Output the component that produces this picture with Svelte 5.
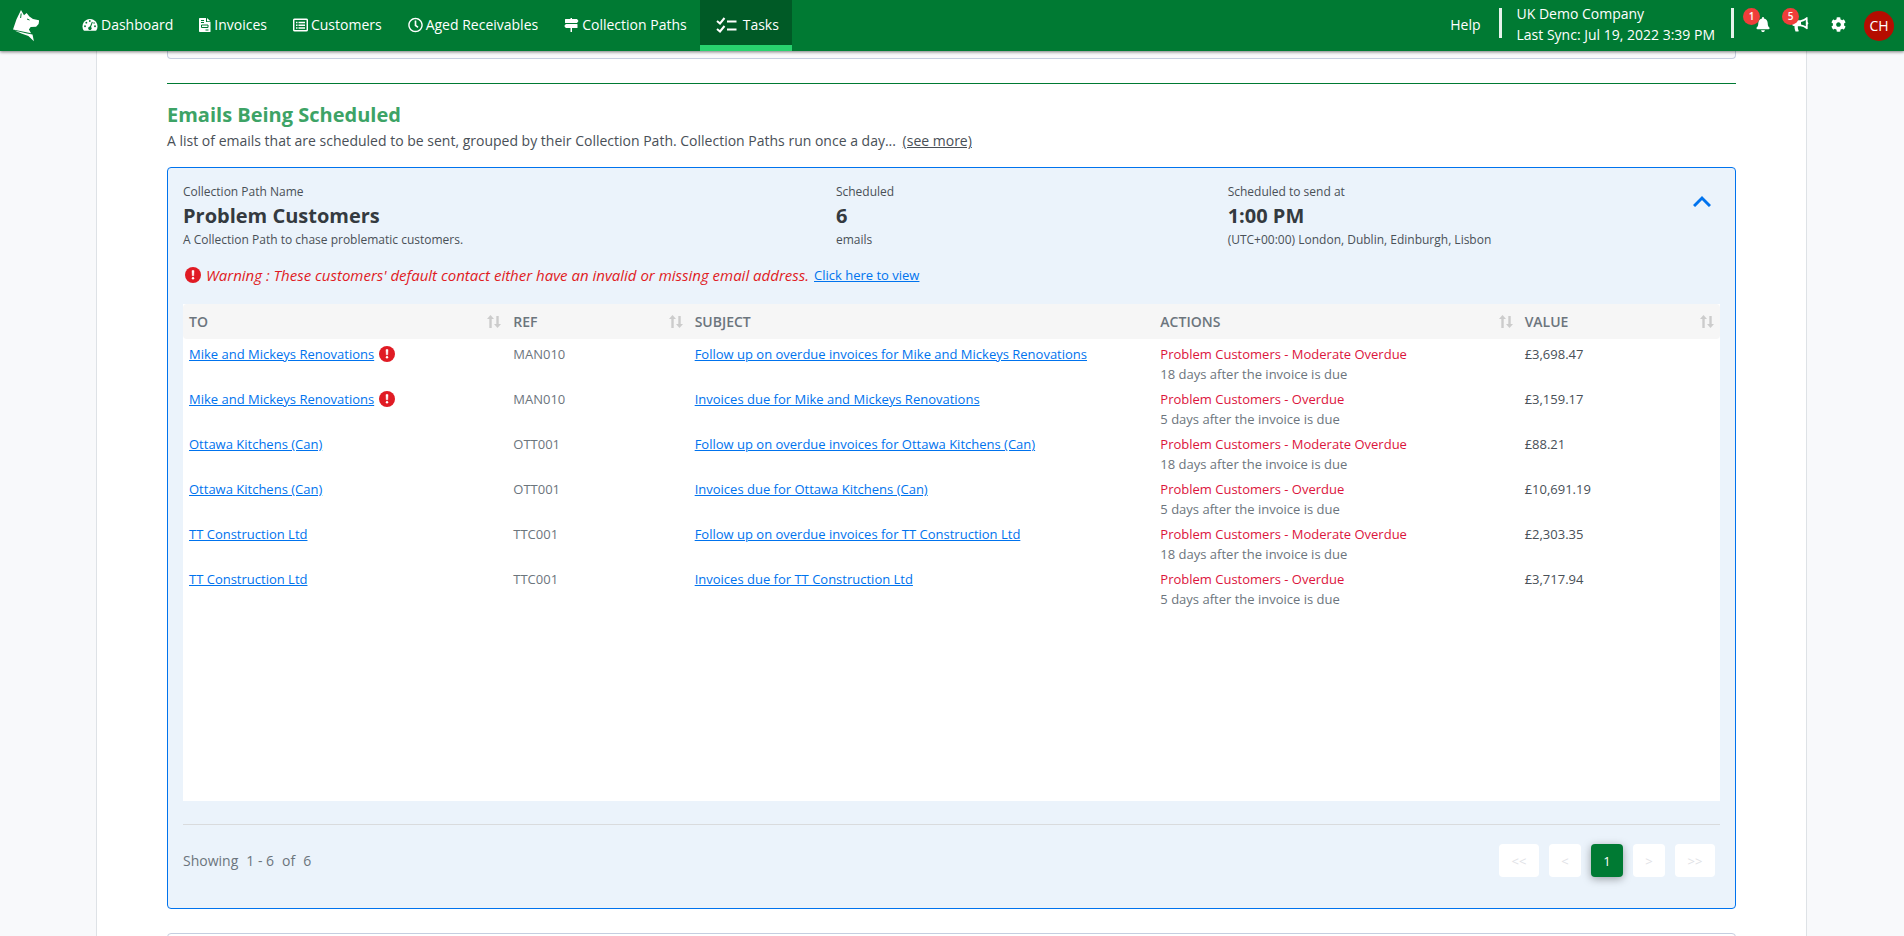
<script lang="ts">
   type Task = {
      to: string;
      ref: string;
      subject: string;
      action: string;
      timing: string;
      value: string;
      hasWarning?: boolean;
   };

   const navItems = [
      { text: "Dashboard", icon: "gauge" },
      { text: "Invoices", icon: "invoice" },
      { text: "Customers", icon: "list" },
      { text: "Aged Receivables", icon: "clock" },
      { text: "Collection Paths", icon: "signs" },
      { text: "Tasks", icon: "tasks" },
   ];
   const activeItem = "Tasks";

   const columns = [
      { name: "To", isSortable: true },
      { name: "Ref", isSortable: true },
      { name: "Subject", isSortable: false },
      { name: "Actions", isSortable: true },
      { name: "Value", isSortable: true },
   ];

   const moderate = { action: "Problem Customers - Moderate Overdue", timing: "18 days after the invoice is due" };
   const overdue = { action: "Problem Customers - Overdue", timing: "5 days after the invoice is due" };

   const followUp = (to: string, ref: string, value: string, hasWarning = false): Task => ({
      to, ref, value, hasWarning, subject: `Follow up on overdue invoices for ${to}`, ...moderate,
   });
   const due = (to: string, ref: string, value: string, hasWarning = false): Task => ({
      to, ref, value, hasWarning, subject: `Invoices due for ${to}`, ...overdue,
   });

   const tasks: Task[] = [
      followUp("Mike and Mickeys Renovations", "MAN010", "£3,698.47", true),
      due("Mike and Mickeys Renovations", "MAN010", "£3,159.17", true),
      followUp("Ottawa Kitchens (Can)", "OTT001", "£88.21"),
      due("Ottawa Kitchens (Can)", "OTT001", "£10,691.19"),
      followUp("TT Construction Ltd", "TTC001", "£2,303.35"),
      due("TT Construction Ltd", "TTC001", "£3,717.94"),
   ];

   let isOpen = $state(true);
   const toggleIsOpen = () => (isOpen = !isOpen);
</script>

{#snippet warningIcon()}
   <svg class="warning-icon" viewBox="0 0 16 16" role="img" aria-label="Warning">
      <circle cx="8" cy="8" r="8" fill="#e01b24" />
      <path d="M7 3.6h2l-.3 5.2H7.3z" fill="#fff" stroke="#fff" stroke-width=".5" />
      <circle cx="8" cy="11.3" r="1.2" fill="#fff" />
   </svg>
{/snippet}

{#snippet navIcon(name: string)}
   {#if name === "gauge"}
      <svg width="16" height="16" viewBox="0 0 17 16">
         <path fill="#fff" d="M8.500 1.500A8 8 0 0 0 1.600 13.500q.3.500.9.500h12q.6 0 .9-.5A8 8 0 0 0 8.500 1.500z" />
         <g fill="#007a33">
            <circle cx="8.300" cy="3.800" r="1" />
            <circle cx="4.600" cy="5.500" r="1" />
            <circle cx="3.200" cy="9.300" r="1" />
            <circle cx="13.800" cy="9.300" r="1" />
            <circle cx="12.800" cy="6" r=".8" />
            <path d="M10.500 4.500l1 .4-1.900 5.100a1.900 1.900 0 1 1-1.100-.4z" />
         </g>
      </svg>
   {:else if name === "invoice"}
      <svg width="12" height="16" viewBox="0 0 12 16">
         <path fill="#fff" d="M.8 1H7v4h4.500v9.500q0 .5-.5.500H.8q-.8 0-.8-.8V1.800Q0 1 .8 1zM8 1l3.500 3.200H8z" />
         <path fill="none" stroke="#007a33" d="M2 3.500h3M2 5.500h3M2.500 8h6.500v2.500H2.500zM6.500 13h3" />
      </svg>
   {:else if name === "list"}
      <svg width="15" height="16" viewBox="0 0 15 16" fill="none" stroke="#fff">
         <rect x=".7" y="2.200" width="13.600" height="11.600" rx="1" stroke-width="1.500" />
         <path stroke-width="1.500" d="M3 5.500h1.500M3 8.200h1.500M3 10.900h1.500M5.500 5.500H12M5.500 8.200H12M5.500 10.900H12" />
      </svg>
   {:else if name === "clock"}
      <svg width="15" height="16" viewBox="0 0 512 512" fill="#fff">
         <path d="M256 8C119 8 8 119 8 256s111 248 248 248 248-111 248-248S393 8 256 8zm0 448c-110.500 0-200-89.500-200-200S145.500 56 256 56s200 89.500 200 200-89.500 200-200 200zm61.800-104.400l-84.900-61.700c-3.100-2.300-4.900-5.900-4.900-9.700V116c0-6.600 5.400-12 12-12h32c6.600 0 12 5.400 12 12v141.700l66.800 48.600c5.400 3.900 6.500 11.400 2.600 16.800L334.600 349c-3.900 5.300-11.400 6.500-16.800 2.600z" />
      </svg>
   {:else if name === "signs"}
      <svg width="15" height="16" viewBox="0 0 15 16" fill="#fff">
         <path d="M6.500 1h1.500v1h5l1.500 2-1.500 2H1.500Q1 6 1 5.500v-3Q1 2 1.500 2h5zM1.800 7H13q.5 0 .5.500v3q0 .5-.5.500H8v4H6.500v-4H1.800L.3 9z" />
      </svg>
   {:else}
      <svg width="22" height="16" viewBox="0 0 22 16" fill="none" stroke="#fff" stroke-width="2">
         <path d="M1 4l3 2.500L8.500 1M1 12l3 2.500L8.500 9M11 4.500h9.500M11 12.500h9.500" />
      </svg>
   {/if}
{/snippet}

<div class="page">
   <header class="topbar">
      <a class="logo" href="#home" aria-label="Home">
         <svg width="26" height="32" viewBox="0 0 26 32">
            <path fill="#fff" d="M8 0l3 5.300 2.600-2.300 2.800 3.500 3.600 2.600 6.200 1.200-.6 3.600-2.500 2.800-5.400.3-1.800 2.500 2.200 3.800L0 19.500 3.500 9.200z" />
            <path fill="#fff" d="M1.500 20.600l12.500 3 5.500.8 1.400 6.800-5.500-5.200-7-2.400z" />
            <path fill="none" stroke="#007a33" d="M8.200 3.500L7.600 8M14 9l2.500 1" />
         </svg>
      </a>
      <nav>
         {#each navItems as { text, icon }}
            <a href="#{icon}" class="nav-item" class:active={text === activeItem}>
               {@render navIcon(icon)}
               <span>{text}</span>
            </a>
         {/each}
      </nav>
      <div class="account">
         <a class="help" href="#help">Help</a>
         <div class="separator"></div>
         <div class="company">
            <span>UK Demo Company</span>
            <span>Last Sync: Jul 19, 2022 3:39 PM</span>
         </div>
         <div class="separator"></div>
         <button class="icon-button" aria-label="Notifications">
            <svg width="14" height="15" viewBox="0 0 448 512" fill="#fff">
               <path d="M224 512c35.320 0 63.970-28.650 63.970-64H160.030c0 35.350 28.650 64 63.970 64zm215.390-149.710c-19.320-20.760-55.470-51.990-55.470-154.290 0-77.700-54.480-139.900-127.940-155.160V32c0-17.670-14.320-32-31.980-32s-31.980 14.330-31.980 32v20.840C118.560 68.100 64.080 130.300 64.080 208c0 102.300-36.150 133.530-55.470 154.290-6 6.450-8.660 14.160-8.610 21.710.11 16.400 12.980 32 32.100 32h383.800c19.120 0 32-15.600 32.100-32 .05-7.550-2.610-15.270-8.610-21.710z" />
            </svg>
            <span class="badge">1</span>
         </button>
         <button class="icon-button" aria-label="Announcements">
            <svg width="17" height="15" viewBox="0 0 17 15" fill="#fff">
               <path fill-rule="evenodd" d="M15.500.3q-.5-.5-1 0-3 2.700-6 2.900H2Q.3 3.200.3 5v2.500Q.3 9 2 9h.5q-.2 3 1 5.500h2.700q.8-.2.400-1-1-2-.7-4.300H8.500q3 .2 6 2.800.7.500 1.200-.2V7.500q1.300-1 0-2.500zM9 5q2.700-.4 4.800-1.900v6.200Q11.700 7.700 9 7.400z" />
            </svg>
            <span class="badge">5</span>
         </button>
         <button class="icon-button" aria-label="Settings">
            <svg width="15" height="15" viewBox="0 0 512 512" fill="#fff">
               <path d="M487.400 315.700l-42.600-24.600c4.300-23.200 4.300-47 0-70.200l42.600-24.600c4.900-2.800 7.100-8.600 5.500-14-11.100-35.600-30-67.800-54.700-94.600-3.800-4.100-10-5.100-14.800-2.300L380.800 110c-17.900-15.400-38.500-27.300-60.800-35.100V25.800c0-5.600-3.900-10.500-9.400-11.700-36.700-8.200-74.300-7.800-109.200 0-5.500 1.200-9.400 6.100-9.400 11.700V75c-22.200 7.900-42.800 19.800-60.800 35.100L88.700 85.500c-4.900-2.800-11-1.900-14.800 2.300-24.700 26.700-43.600 58.900-54.700 94.600-1.700 5.400.6 11.200 5.500 14L67.300 221c-4.300 23.200-4.300 47 0 70.200l-42.600 24.600c-4.900 2.800-7.100 8.600-5.500 14 11.100 35.600 30 67.800 54.700 94.600 3.800 4.100 10 5.100 14.800 2.300l42.600-24.600c17.900 15.400 38.500 27.300 60.800 35.100v49.200c0 5.600 3.900 10.500 9.400 11.700 36.700 8.200 74.300 7.800 109.200 0 5.500-1.200 9.400-6.100 9.400-11.700v-49.200c22.200-7.900 42.800-19.800 60.800-35.100l42.600 24.600c4.900 2.800 11 1.900 14.800-2.300 24.700-26.700 43.600-58.900 54.700-94.600 1.500-5.500-.7-11.300-5.600-14.100zM256 336c-44.100 0-80-35.900-80-80s35.900-80 80-80 80 35.900 80 80-35.900 80-80 80z" />
            </svg>
         </button>
         <button class="avatar">CH</button>
      </div>
   </header>

   <main>
      <div class="previous-card"></div>
      <section>
         <h2>Emails Being Scheduled</h2>
         <p class="description">
            A list of emails that are scheduled to be sent, grouped by their Collection Path. Collection Paths run once a day...
            <a href="#more">(see more)</a>
         </p>

         <article class="card">
            <div class="summary">
               <div class="fact">
                  <span>Collection Path Name</span>
                  <strong>Problem Customers</strong>
                  <span>A Collection Path to chase problematic customers.</span>
               </div>
               <div class="fact">
                  <span>Scheduled</span>
                  <strong>6</strong>
                  <span>emails</span>
               </div>
               <div class="fact">
                  <span>Scheduled to send at</span>
                  <strong>1:00 PM</strong>
                  <span>(UTC+00:00) London, Dublin, Edinburgh, Lisbon</span>
               </div>
               <button class="toggle" aria-label="Toggle details" aria-expanded={isOpen} onclick={toggleIsOpen}>
                  <svg width="18" height="12" viewBox="0 0 18 12" fill="none" stroke="#0073ee" stroke-width="3">
                     <path d={isOpen ? "M1 11l8-8 8 8" : "M1 2l8 8 8-8"} />
                  </svg>
               </button>
            </div>

            {#if isOpen}
               <div class="warning">
                  {@render warningIcon()}
                  <em>Warning : These customers' default contact either have an invalid or missing email address.</em>
                  <a href="#invalid">Click here to view</a>
               </div>

               <div class="table-area">
                  <table>
                     <colgroup>
                        {#each columns as { name }}
                           <col class={name.toLowerCase()} />
                        {/each}
                     </colgroup>
                     <thead>
                        <tr>
                           {#each columns as { name, isSortable }}
                              <th>
                                 {#if isSortable}
                                    <button class="sort">
                                       {name}
                                       <svg width="14" height="14" viewBox="0 0 14 14" fill="#ccc">
                                          <path d="M3.500 0L7 4H4.700v9H2.300V4H0zM10.500 13L7 9h2.300V1h2.400v8H14z" />
                                       </svg>
                                    </button>
                                 {:else}
                                    {name}
                                 {/if}
                              </th>
                           {/each}
                        </tr>
                     </thead>
                     <tbody>
                        {#each tasks as task}
                           <tr>
                              <td>
                                 <div class="customer">
                                    <a href="#customer">{task.to}</a>
                                    {#if task.hasWarning}
                                       {@render warningIcon()}
                                    {/if}
                                 </div>
                              </td>
                              <td>{task.ref}</td>
                              <td><a href="#email">{task.subject}</a></td>
                              <td>
                                 <div class="action">{task.action}</div>
                                 <div class="timing">{task.timing}</div>
                              </td>
                              <td class="amount">{task.value}</td>
                           </tr>
                        {/each}
                     </tbody>
                  </table>
               </div>

               <footer>
                  <div class="showing">
                     <span>Showing</span>
                     <span>1 - 6</span>
                     <span>of</span>
                     <span>6</span>
                  </div>
                  <div class="pager">
                     <button class="wide" disabled>&lt;&lt;</button>
                     <button disabled>&lt;</button>
                     <button class="current">1</button>
                     <button disabled>&gt;</button>
                     <button class="wide" disabled>&gt;&gt;</button>
                  </div>
               </footer>
            {/if}
         </article>
         <div class="next-card"></div>
      </section>
   </main>
</div>

<style>
   :global(body) {
      background: #f8f9fb;
      font-family: "Open Sans", sans-serif;
      font-size: 14px;
      line-height: 20px;
      color: #495057;
   }

   .page {
      display: flex;
      flex-direction: column;
      height: 100vh;
      overflow: hidden;
   }

   a {
      color: #0073ee;
   }

   button {
      border: 0;
      padding: 0;
      background: none;
      font: inherit;
      color: inherit;
      cursor: pointer;
   }

   svg {
      display: block;
      flex: none;
   }

   .topbar {
      position: relative;
      z-index: 1;
      display: flex;
      flex: none;
      height: 51px;
      background: #007a33;
      box-shadow: 0 1px 3px rgba(0, 0, 0, 0.5);
      color: #fff;
   }

   .topbar a {
      color: #fff;
      text-decoration: none;
   }

   .logo {
      display: flex;
      align-items: center;
      padding: 0 30px 0 13px;
   }

   nav {
      display: flex;
   }

   .nav-item {
      display: flex;
      align-items: center;
      gap: 3px;
      padding: 0 13px 2px;
   }

   .nav-item.active {
      gap: 5px;
      padding: 4px 13px 0 16px;
      border-bottom: 6px solid #28d26e;
      background: #005a26;
   }

   .account {
      display: flex;
      align-items: center;
      margin-left: auto;
      padding-right: 10px;
   }

   .help {
      padding-bottom: 2px;
   }

   .separator {
      width: 3px;
      height: 30px;
      margin: 0 15px 6px 18px;
      background: #e6f2eb;
   }

   .company + .separator {
      margin: 0 0 6px;
   }

   .company {
      display: flex;
      flex-direction: column;
      padding: 0 16px 4px 0;
      line-height: 21px;
   }

   .icon-button {
      position: relative;
      margin: 0 0 2px 22px;
   }

   .badge {
      position: absolute;
      right: 10px;
      bottom: 7px;
      width: 17px;
      height: 17px;
      border-radius: 50%;
      background: #f03e3a;
      font-size: 10px;
      font-weight: 600;
      line-height: 17px;
   }

   .avatar {
      width: 30px;
      height: 30px;
      margin-left: 18px;
      border-radius: 50%;
      background: #b50d00;
   }

   main {
      flex: 1;
      margin: 0 97px 0 96px;
      padding: 0 70px;
      border: solid #dee2e6;
      border-width: 0 1px;
      background: #fff;
   }

   .previous-card {
      height: 7px;
      border: 1px solid #c5cee0;
      border-top: 0;
      border-radius: 0 0 4px 4px;
      background: #f8f9fb;
   }

   section {
      margin-top: 24px;
      border-top: 1px solid #007a33;
   }

   h2 {
      margin: 17px 0 2px;
      font-size: 20px;
      font-weight: 700;
      line-height: 28px;
      color: #3da366;
   }

   .description {
      margin: 0 0 16px;
   }

   .description a {
      margin-left: 3px;
      color: #495057;
   }

   .card {
      padding: 16px 15px 31px;
      border: 1px solid #0073ee;
      border-radius: 4px;
      background: #ebf3fb;
   }

   .summary {
      position: relative;
      display: grid;
      grid-template-columns: 5fr 3fr 4fr;
      margin: 0 -15px;
   }

   .fact {
      display: flex;
      flex-direction: column;
      gap: 2px;
      padding: 0 15px;
      font-size: 12px;
      line-height: 16px;
   }

   .fact strong {
      font-size: 20px;
      line-height: 28px;
      color: #343a40;
   }

   .toggle {
      position: absolute;
      top: 11px;
      right: 24px;
   }

   .warning {
      display: flex;
      align-items: center;
      gap: 5px;
      margin: 17px 0 19px;
      padding: 0 2px;
      font-size: 15px;
      color: #e01b24;
   }

   .warning a {
      font-size: 13px;
   }

   .warning-icon {
      width: 16px;
      height: 16px;
   }

   .table-area {
      min-height: 497px;
      background: #fff;
   }

   table {
      width: 100%;
      table-layout: fixed;
      border-spacing: 0;
      font-size: 13px;
      color: #6c757d;
   }

   th {
      height: 35px;
      padding: 0 6px;
      background: #f6f6f6;
      font-size: 14px;
      font-weight: 600;
      text-align: left;
      text-transform: uppercase;
   }

   th:first-child {
      border-radius: 4px 0 0 4px;
   }

   th:last-child {
      border-radius: 0 4px 4px 0;
   }

   col.to {
      width: 21.1%;
   }

   col.ref {
      width: 11.8%;
   }

   col.subject {
      width: 30.3%;
   }

   col.actions {
      width: 23.7%;
   }

   col.value {
      width: 13.1%;
   }

   .sort {
      display: flex;
      align-items: center;
      justify-content: space-between;
      width: 100%;
      text-transform: inherit;
   }

   td {
      padding: 5px 6px 0;
      vertical-align: top;
   }

   .customer {
      display: flex;
      align-items: center;
      gap: 5px;
   }

   .action {
      color: #dc143c;
   }

   .amount {
      color: #495057;
   }

   footer {
      display: flex;
      align-items: center;
      justify-content: space-between;
      margin-top: 23px;
      padding: 19px 5px 0 0;
      border-top: 1px solid #d9dbdd;
   }

   .showing {
      display: flex;
      gap: 8px;
      color: #6c757d;
   }

   .pager {
      display: flex;
      gap: 10px;
   }

   .pager button {
      width: 32px;
      height: 33px;
      border-radius: 4px;
      background: #fff;
      font-size: 13px;
      color: #dfe2e6;
   }

   .pager .wide {
      width: 40px;
   }

   .pager .current {
      background: #007a33;
      box-shadow: 0 2px 8px rgba(0, 0, 0, 0.35);
      color: #fff;
   }

   .next-card {
      height: 60px;
      margin-top: 24px;
      border: 1px solid #c5cee0;
      border-radius: 4px;
   }
</style>
